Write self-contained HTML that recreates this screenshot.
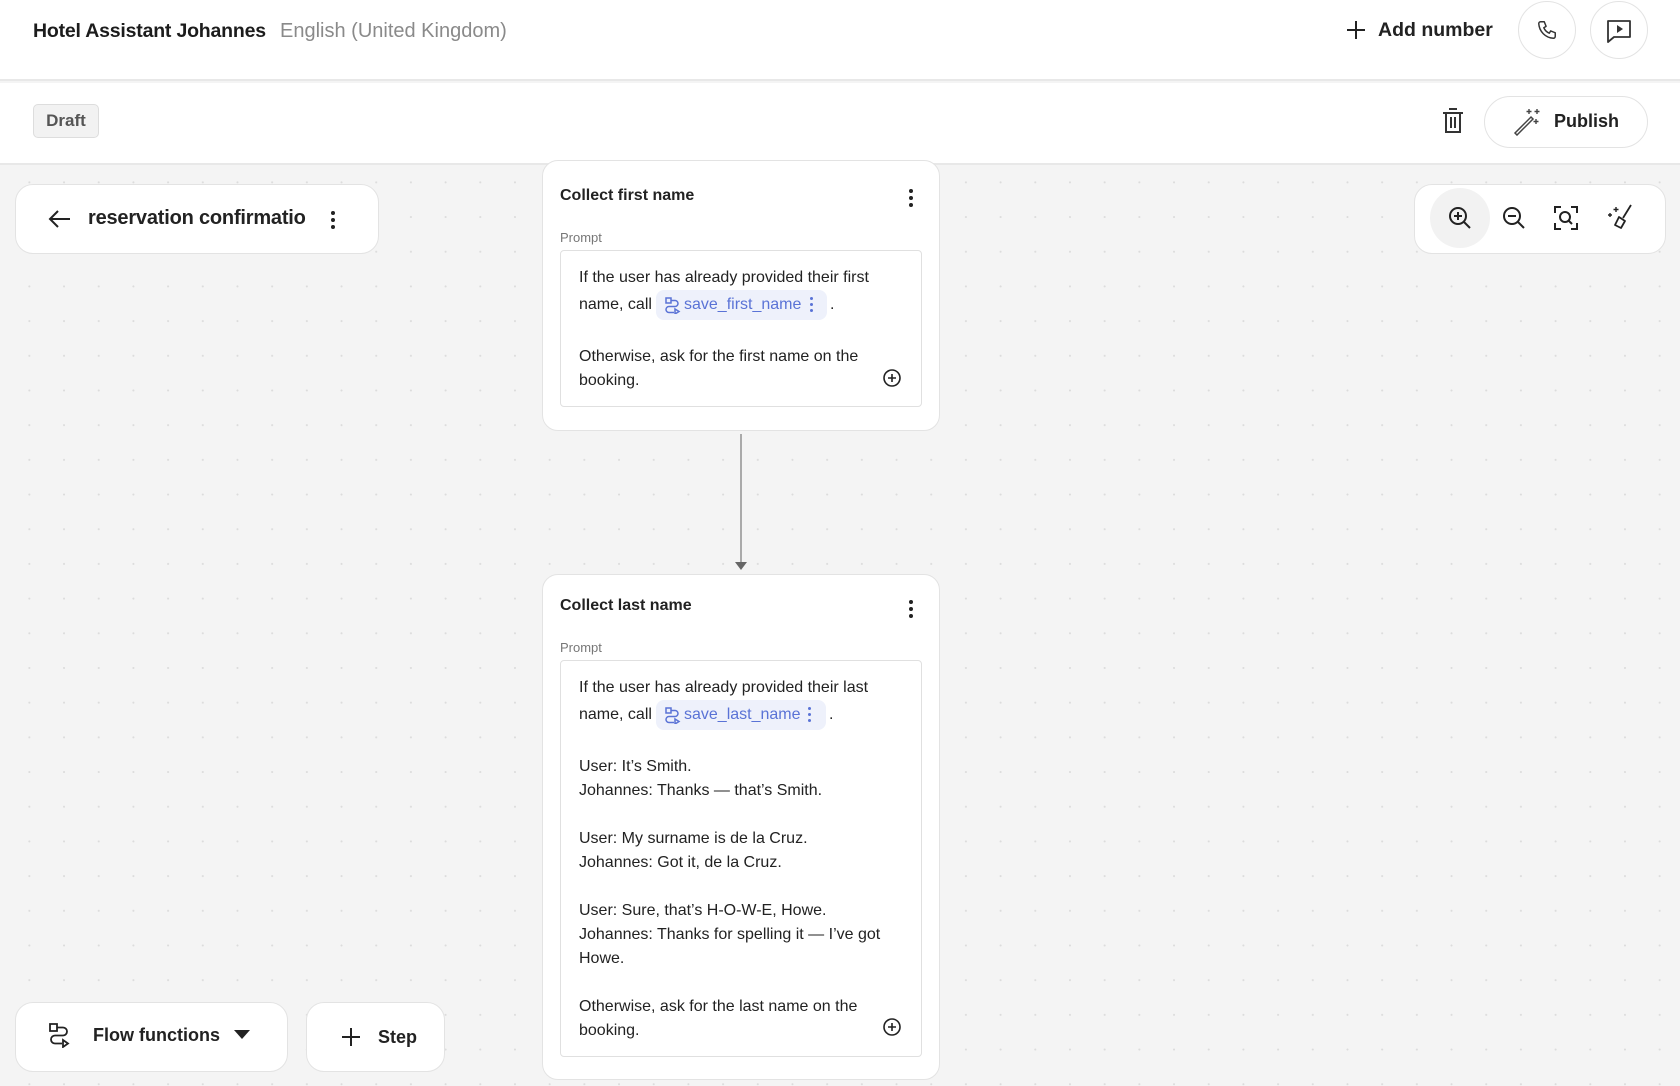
<!DOCTYPE html>
<html><head><meta charset="utf-8"><style>
*{box-sizing:border-box;margin:0;padding:0}
body{width:1680px;height:1086px;overflow:hidden;font-family:"Liberation Sans",sans-serif;color:#1c1c1c;position:relative;background:#f4f4f4}
.abs{position:absolute}
.canvas{position:absolute;left:0;top:165px;width:1680px;height:921px;background-color:#f4f4f4;background-image:radial-gradient(circle,#dcdcdc 0.8px,transparent 1.2px);background-size:34.7px 34.7px;background-position:12px 0px}
.card{position:absolute;background:#fff;border:1px solid #e3e3e3;border-radius:16px}
.t{position:absolute;font-size:16px;color:#222;white-space:nowrap}
.chip{position:absolute;background:#eef1fb;border-radius:8px;color:#5a73d6;font-size:16px;height:30px;line-height:30px;padding-left:28px}
.vd{position:absolute;width:4px}
.vd i{display:block;width:4px;height:4px;border-radius:2px;background:#222;margin-bottom:3px}
</style></head><body>
<div class="abs" style="left:0;top:0;width:1680px;height:81px;background:#fff;border-bottom:2px solid #e8e8e8"></div>
<div class="t" style="left:33px;top:20px;font-size:19.5px;font-weight:bold;color:#1c1c1c;letter-spacing:-0.2px">Hotel Assistant Johannes</div>
<div class="t" style="left:280px;top:20px;font-size:20px;color:#8a8a8a">English (United Kingdom)</div>
<svg class="abs" style="left:1346px;top:20px" width="20" height="20" viewBox="0 0 20 20"><path d="M10 1v18M1 10h18" stroke="#222" stroke-width="2"/></svg>
<div class="t" style="left:1378px;top:19px;font-size:19.5px;font-weight:bold">Add number</div>
<div class="abs" style="left:1518px;top:1px;width:58px;height:58px;border:1px solid #e3e3e3;border-radius:50%"></div>
<svg class="abs" style="left:1536px;top:19px" width="22" height="22" viewBox="0 0 24 24"><path d="M5 3l4 0 2 5-2.5 1.5a11 11 0 0 0 6 6L16 13l5 2v4a2 2 0 0 1-2 2A17 17 0 0 1 3 5a2 2 0 0 1 2-2z" fill="none" stroke="#333" stroke-width="1.6" stroke-linejoin="round"/></svg>
<div class="abs" style="left:1590px;top:1px;width:58px;height:58px;border:1px solid #e3e3e3;border-radius:50%"></div>
<svg class="abs" style="left:1606px;top:18px" width="26" height="26" viewBox="0 0 26 26"><path d="M2 3h22v16H8l-6 5z" fill="none" stroke="#333" stroke-width="1.8" stroke-linejoin="round"/><path d="M11 7v8l6-4z" fill="#333"/></svg>
<div class="abs" style="left:0;top:83px;width:1680px;height:82px;background:#fff;border-bottom:2px solid #e8e8e8"></div>
<div class="abs" style="left:33px;top:104px;width:66px;height:34px;background:#f2f2f2;border:1px solid #ddd;border-radius:5px;font-size:17px;font-weight:bold;color:#555;text-align:center;line-height:32px">Draft</div>
<svg class="abs" style="left:1441px;top:108px" width="24" height="26" viewBox="0 0 24 26"><path d="M8 1h8M2 5h20M5 5v19h14V5M10 9v11M14 9v11" fill="none" stroke="#333" stroke-width="2"/></svg>
<div class="abs" style="left:1484px;top:96px;width:164px;height:52px;border:1px solid #e3e3e3;border-radius:26px;background:#fff"></div>
<svg class="abs" style="left:1512px;top:106px" width="30" height="30" viewBox="0 0 30 30"><path d="M3 27L19 11l2 2L5 29z" fill="none" stroke="#444" stroke-width="1.5"/><path d="M17 3v5M14.5 5.5h5M25 3v5M22.5 5.5h5M24 13v5M21.5 15.5h5" stroke="#444" stroke-width="1.4"/></svg>
<div class="t" style="left:1554px;top:111px;font-size:18px;font-weight:bold">Publish</div>
<div class="canvas"></div>
<div class="card" style="left:15px;top:184px;width:364px;height:70px;border-radius:18px"></div>
<svg class="abs" style="left:48px;top:209px" width="24" height="20" viewBox="0 0 24 20"><path d="M22 10H2M10 2l-8 8 8 8" fill="none" stroke="#222" stroke-width="2"/></svg>
<div class="t" style="left:88px;top:207px;font-size:20px;font-weight:bold;width:219px;overflow:hidden;letter-spacing:-0.2px">reservation confirmation</div>
<div class="vd" style="left:331px;top:211px"><i></i><i></i><i></i></div>
<div class="card" style="left:1414px;top:184px;width:252px;height:70px;border-radius:18px"></div>
<div class="abs" style="left:1430px;top:188px;width:60px;height:60px;border-radius:50%;background:#f2f2f2"></div>
<svg class="abs" style="left:1447px;top:205px" width="26" height="26" viewBox="0 0 26 26"><circle cx="11" cy="11" r="8" fill="none" stroke="#222" stroke-width="2"/><path d="M17 17l6 6M11 7v8M7 11h8" stroke="#222" stroke-width="2"/></svg>
<svg class="abs" style="left:1501px;top:205px" width="26" height="26" viewBox="0 0 26 26"><circle cx="11" cy="11" r="8" fill="none" stroke="#222" stroke-width="2"/><path d="M17 17l6 6M7 11h8" stroke="#222" stroke-width="2"/></svg>
<svg class="abs" style="left:1553px;top:205px" width="26" height="26" viewBox="0 0 26 26"><path d="M2 8V2h6M18 2h6v6M24 18v6h-6M8 24H2v-6" fill="none" stroke="#222" stroke-width="2"/><circle cx="12" cy="12" r="5" fill="none" stroke="#222" stroke-width="2"/><path d="M16 16l3 3" stroke="#222" stroke-width="2"/></svg>
<svg class="abs" style="left:1606px;top:203px" width="28" height="28" viewBox="0 0 28 28"><path d="M25 2L17 15M13 14l6 4-4 7-6-3z" fill="none" stroke="#222" stroke-width="1.8" stroke-linejoin="round"/><path d="M10 4v5M7.5 6.5h5M4 10v4M2 12h4" stroke="#222" stroke-width="1.4"/></svg>

<div class="card" style="left:542px;top:160px;width:398px;height:271px"></div>
<div class="t" style="left:560px;top:187px;font-size:16px;font-weight:bold">Collect first name</div>
<div class="vd" style="left:909px;top:189px"><i></i><i></i><i></i></div>
<div class="t" style="left:560px;top:230px;font-size:13px;color:#777">Prompt</div>
<div class="abs" style="left:560px;top:250px;width:362px;height:157px;border:1px solid #e0e0e0;border-radius:4px"></div>
<div class="t" style="left:579px;top:269px">If the user has already provided their first</div>
<div class="t" style="left:579px;top:296px">name, call</div>
<div class="chip" style="left:656px;top:290px;width:171px">save_first_name</div>
<svg class="abs" style="left:664px;top:296px" width="18" height="18" viewBox="0 0 18 18"><path d="M2 2h5v5H2zM7 4.5h4a3 3 0 0 1 0 6H5a3 3 0 0 0 0 6h5M11 13v5l4-2.5z" fill="none" stroke="#5a73d6" stroke-width="1.5"/></svg>
<div class="vd" style="left:810px;top:297px"><i style="background:#5a73d6;width:3px;height:3px"></i><i style="background:#5a73d6;width:3px;height:3px"></i><i style="background:#5a73d6;width:3px;height:3px"></i></div>
<div class="t" style="left:830px;top:296px">.</div>
<div class="t" style="left:579px;top:348px">Otherwise, ask for the first name on the</div>
<div class="t" style="left:579px;top:372px">booking.</div>
<svg class="abs" style="left:882px;top:368px" width="20" height="20" viewBox="0 0 20 20"><circle cx="10" cy="10" r="8" fill="none" stroke="#222" stroke-width="1.6"/><path d="M10 6v8M6 10h8" stroke="#222" stroke-width="1.6"/></svg>

<div class="abs" style="left:740px;top:434px;width:2px;height:128px;background:#aaa"></div>
<svg class="abs" style="left:735px;top:562px" width="12" height="8" viewBox="0 0 12 8"><path d="M0 0h12L6 8z" fill="#666"/></svg>

<div class="card" style="left:542px;top:574px;width:398px;height:506px"></div>
<div class="t" style="left:560px;top:597px;font-size:16px;font-weight:bold">Collect last name</div>
<div class="vd" style="left:909px;top:600px"><i></i><i></i><i></i></div>
<div class="t" style="left:560px;top:640px;font-size:13px;color:#777">Prompt</div>
<div class="abs" style="left:560px;top:660px;width:362px;height:397px;border:1px solid #e0e0e0;border-radius:4px"></div>
<div class="t" style="left:579px;top:679px">If the user has already provided their last</div>
<div class="t" style="left:579px;top:706px">name, call</div>
<div class="chip" style="left:656px;top:700px;width:170px">save_last_name</div>
<svg class="abs" style="left:664px;top:706px" width="18" height="18" viewBox="0 0 18 18"><path d="M2 2h5v5H2zM7 4.5h4a3 3 0 0 1 0 6H5a3 3 0 0 0 0 6h5M11 13v5l4-2.5z" fill="none" stroke="#5a73d6" stroke-width="1.5"/></svg>
<div class="vd" style="left:808px;top:707px"><i style="background:#5a73d6;width:3px;height:3px"></i><i style="background:#5a73d6;width:3px;height:3px"></i><i style="background:#5a73d6;width:3px;height:3px"></i></div>
<div class="t" style="left:829px;top:706px">.</div>
<div class="t" style="left:579px;top:758px">User: It’s Smith.</div>
<div class="t" style="left:579px;top:782px">Johannes: Thanks — that’s Smith.</div>
<div class="t" style="left:579px;top:830px">User: My surname is de la Cruz.</div>
<div class="t" style="left:579px;top:854px">Johannes: Got it, de la Cruz.</div>
<div class="t" style="left:579px;top:902px">User: Sure, that’s H-O-W-E, Howe.</div>
<div class="t" style="left:579px;top:926px">Johannes: Thanks for spelling it — I’ve got</div>
<div class="t" style="left:579px;top:950px">Howe.</div>
<div class="t" style="left:579px;top:998px">Otherwise, ask for the last name on the</div>
<div class="t" style="left:579px;top:1022px">booking.</div>
<svg class="abs" style="left:882px;top:1017px" width="20" height="20" viewBox="0 0 20 20"><circle cx="10" cy="10" r="8" fill="none" stroke="#222" stroke-width="1.6"/><path d="M10 6v8M6 10h8" stroke="#222" stroke-width="1.6"/></svg>

<div class="card" style="left:15px;top:1002px;width:273px;height:70px;border-radius:18px"></div>
<svg class="abs" style="left:48px;top:1022px" width="24" height="26" viewBox="0 0 24 26"><path d="M2 2h7v7H2zM9 5.5h6a4 4 0 0 1 0 8H7a4 4 0 0 0 0 8h7M15 18v7l5-3.5z" fill="none" stroke="#222" stroke-width="1.8"/></svg>
<div class="t" style="left:93px;top:1025px;font-size:18px;font-weight:bold">Flow functions</div>
<svg class="abs" style="left:234px;top:1030px" width="16" height="10" viewBox="0 0 16 10"><path d="M0 0h16L8 9z" fill="#222"/></svg>
<div class="card" style="left:306px;top:1002px;width:139px;height:70px;border-radius:18px"></div>
<svg class="abs" style="left:341px;top:1027px" width="20" height="20" viewBox="0 0 20 20"><path d="M10 1v18M1 10h18" stroke="#222" stroke-width="2"/></svg>
<div class="t" style="left:378px;top:1027px;font-size:18px;font-weight:bold">Step</div>
</body></html>
